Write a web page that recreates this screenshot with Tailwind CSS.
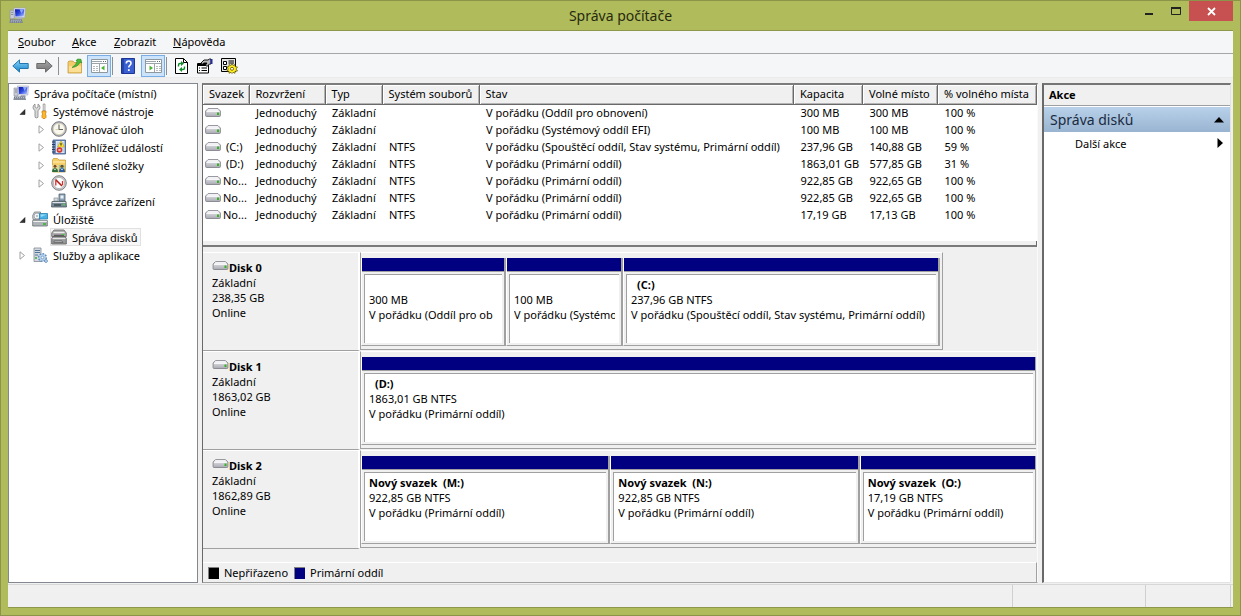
<!DOCTYPE html>
<html lang="cs">
<head>
<meta charset="utf-8">
<meta name="viewport" content="width=device-width, initial-scale=1">
<title>Správa počítače</title>
<script src="https://cdn.jsdelivr.net/npm/@tailwindcss/browser@4"></script>
</head>
<body class="h-screen overflow-hidden font-['Noto_Sans','Open_Sans',sans-serif] text-[11px] leading-[15px] text-black">
<svg class="absolute size-0" aria-hidden="true">
  <linearGradient id="gBlue" x1="0" y1="0" x2="0" y2="1"><stop offset="0" stop-color="#8ad6fa"/><stop offset="1" stop-color="#1583c9"/></linearGradient>
  <linearGradient id="gGray" x1="0" y1="0" x2="0" y2="1"><stop offset="0" stop-color="#aaa"/><stop offset="1" stop-color="#707070"/></linearGradient>
  <linearGradient id="gScreen" x1="0" y1="0" x2="1" y2="1"><stop offset="0" stop-color="#0818a0"/><stop offset=".5" stop-color="#2c48e0"/><stop offset="1" stop-color="#b8d0ff"/></linearGradient>
  <linearGradient id="gDrive" x1="0" y1="0" x2="0" y2="1"><stop offset="0" stop-color="#ececf0"/><stop offset="1" stop-color="#a9a9b2"/></linearGradient>
  <symbol id="computer" viewBox="0 0 16 16">
    <path d="M1 3h4v8H1z" fill="#c9ccd6" stroke="#8b8f9c" stroke-width=".6"/><path d="M2 5h2M2 7h2" stroke="#6b7080" stroke-width=".7"/>
    <path d="M4.500 1h11l-.7 9H5.500z" fill="#e4e7f2" stroke="#9aa0b8" stroke-width=".6"/><path d="M5.600 2h8.800l-.5 7H6z" fill="url(#gScreen)"/>
    <path d="M10 2l1.500 4 2.700-4z" fill="#8ea6f8"/><path d="M8 10h4l1 2H7z" fill="#aab0c0"/>
    <path d="M1 11.500h11l1 3.500H.5z" fill="#747d8c"/><path d="M2 12.500h9.500M1.500 14h10.500" stroke="#d5dbe4" stroke-width=".7" stroke-dasharray="1.200 .8"/>
  </symbol>
  <symbol id="drive" viewBox="0 0 16 9">
    <path d="M3 .6h10L15.400 3v4.600q0 .9-1 .9H1.600q-1 0-1-.9V3z" fill="url(#gDrive)" stroke="#85858c" stroke-width=".9"/>
    <path d="M3.200 1.200h9.600L14 2.800H2z" fill="#fafafc"/><path d="M1.500 3.500h13" stroke="#fff" stroke-width=".8"/><path d="M12 4.500h2v2.500h-2z" fill="#35b325"/>
  </symbol>
  <symbol id="tools" viewBox="0 0 16 16">
    <path d="M3 1v3l1.500 1L6 4V1q2 1 2 3.500Q8 6.500 6 7.500v6.700q-1.500 1.500-3 0V7.500Q1 6.500 1 4.500 1 2 3 1z" fill="#d9d9d9" stroke="#858585" stroke-width=".8"/>
    <path d="M11.200 1h1.800v7h-1.800z" fill="#eee" stroke="#888" stroke-width=".7"/><path d="M10 8h4v2l-.8 1 .8 1v2.500l-1 1h-2l-1-1V12l.8-1-.8-1z" fill="#fcb92c" stroke="#c77b10" stroke-width=".7"/>
  </symbol>
  <symbol id="clock" viewBox="0 0 16 16">
    <circle cx="8" cy="8" r="7.300" fill="#b5b7bc" stroke="#6f7278" stroke-width=".9"/><circle cx="8" cy="8" r="5.700" fill="#f9f8ee" stroke="#d8ceb0" stroke-width=".8"/>
    <path d="M8 3.500v5h4" fill="none" stroke="#666" stroke-width="1.100"/><path d="M8 8.500H4.500" stroke="#c9b885" stroke-width=".6"/>
  </symbol>
  <symbol id="events" viewBox="0 0 16 16">
    <path d="M2 1h12.500v14H2z" fill="#7291be" stroke="#41598a" stroke-width=".8"/><path d="M5 2h8.500v12H5z" fill="#d9e6f7"/><path d="M6 4h7M6 6h7M6 8h7M6 10h7M6 12h7" stroke="#8aa7d0" stroke-width=".6"/>
    <path d="M1 3h3M1 5.500h3M1 8h3M1 10.500h3M1 13h3" stroke="#2b3a5c" stroke-width="1"/>
    <path d="M10 2l3.500 6h-7z" fill="#ffe23c" stroke="#b59600" stroke-width=".5"/><path d="M10 4v2.500" stroke="#000" stroke-width=".9"/>
    <circle cx="8.500" cy="11" r="2.800" fill="#d8342a"/><path d="M7.500 10l2 2m0-2l-2 2" stroke="#fff" stroke-width=".8"/>
  </symbol>
  <symbol id="shared" viewBox="0 0 16 16">
    <path d="M1.500 3l1-1.500h4L8 3h6.500v12h-13z" fill="#f5cf69" stroke="#c39a35" stroke-width=".7"/><path d="M2 5h12" stroke="#fff0b8"/>
    <path d="M1 8h5.500v7H1z" fill="#e9dba8"/><path d="M8 8h5.500v7H8z" fill="#8cc5b0"/>
    <circle cx="4" cy="9.200" r="1.500" fill="#7a4a1c"/><path d="M1 15q0-4 3-4t3 4z" fill="#2e6f3d"/><circle cx="11" cy="9.200" r="1.500" fill="#7a4a1c"/><path d="M8 15q0-4 3-4t3 4z" fill="#2a5c9c"/>
    <path d="M3 11.500l1 1.500 1-1.500M10 11.500l1 1.500 1-1.500" fill="none" stroke="#fff" stroke-width=".7"/>
  </symbol>
  <symbol id="perf" viewBox="0 0 16 16">
    <circle cx="8" cy="8" r="7.300" fill="#c9ccd0" stroke="#777" stroke-width=".9"/><circle cx="8" cy="8" r="5.600" fill="#fff" stroke="#a5a5a5" stroke-width=".7"/><path d="M4.800 10.500V5.500M11.500 10V6" fill="none" stroke="#dc2d28" stroke-width="1.300"/><path d="M4.500 4.500l6.500 6.500" stroke="#b01f1a" stroke-width="1.600"/>
  </symbol>
  <symbol id="devices" viewBox="0 0 16 16">
    <path d="M8 1h6v7H8z" fill="#8ba2b5" stroke="#53636f" stroke-width=".8"/><path d="M9.500 2.500h3v3h-3z" fill="#e9f2f8"/><path d="M3 5h4v3H3z" fill="#d6dce0" stroke="#77818a" stroke-width=".6"/>
    <path d="M1 8.500h14l.5 5.500H.5z" fill="#7b8c98" stroke="#4d5a63" stroke-width=".8"/><path d="M1.500 9.500h13" stroke="#dce4e9"/><path d="M3 12h7" stroke="#303a42" stroke-width="1.200"/><path d="M12 11.500h2" stroke="#4cd13e" stroke-width="1.300"/>
  </symbol>
  <symbol id="storage" viewBox="0 0 16 16">
    <path d="M.7 9.500h14.600v5.500H.7z" fill="#aeb4b7" stroke="#686e72" stroke-width=".8"/><path d="M1.200 10.300h13.600" stroke="#fff"/><path d="M11 13h3" stroke="#31b529" stroke-width="1.500"/>
    <path d="M.7 4.500L2.500 1h6L8 8.500H1z" fill="#ced1d4" stroke="#75797d" stroke-width=".8"/><circle cx="5" cy="5" r="3" fill="#eff3f5" stroke="#8c9498" stroke-width=".7"/><circle cx="5" cy="5" r=".8" fill="#7d858b"/>
    <path d="M7.500 2.500h8v5.500h-8z" fill="#49b1e6" stroke="#267fad" stroke-width=".8"/><path d="M8.500 3.500h6L9 6z" fill="#9adcf8"/>
  </symbol>
  <symbol id="diskmgmt" viewBox="0 0 16 16">
    <path d="M3 1h10l2.300 3v3.500H.7V4z" fill="#a9a9ab" stroke="#666" stroke-width=".8"/><path d="M2.500 3.500h11" stroke="#ececec" stroke-width="1.300"/><path d="M3 6.300h10" stroke="#4a4a4a"/>
    <path d="M2 7.500h12l1.300 2V15H.7V9.500z" fill="#98999b" stroke="#5a5a5a" stroke-width=".8"/><path d="M1.500 9.500h13" stroke="#e6e6e6" stroke-width="1.200"/><path d="M3 12h8l1 1.500H3z" fill="#d0d0d0" stroke="#444" stroke-width=".6"/><path d="M11.500 5.500h2" stroke="#45cc37" stroke-width="1.200"/>
  </symbol>
  <symbol id="services" viewBox="0 0 16 16">
    <path d="M2 1h7v13.500H2z" fill="#d5dae0" stroke="#808a96" stroke-width=".8"/><path d="M3 3.500h5M3 5.500h5M3 8h3" stroke="#51749b" stroke-width="1"/><path d="M3 11h2" stroke="#38ad36" stroke-width="1.300"/>
    <circle cx="10.500" cy="10.500" r="3.800" fill="#b5d0eb" stroke="#638dba" stroke-width="1.600" stroke-dasharray="1.700 1.200"/><circle cx="10.500" cy="10.500" r="3" fill="#b5d0eb"/><circle cx="10.500" cy="10.500" r="1.300" fill="#fff" stroke="#638dba" stroke-width=".7"/>
    <circle cx="14" cy="14" r="1.400" fill="#d9e8f6" stroke="#638dba" stroke-width=".9"/>
  </symbol>
  <symbol id="arrowL" viewBox="0 0 17 14"><path d="M.8 7L7.500.9v3.600h8.700v5H7.500v3.600z"/></symbol>
  <symbol id="arrowR" viewBox="0 0 17 14"><path d="M16.200 7L9.500.9v3.600H.8v5h8.700v3.600z"/></symbol>
  <symbol id="folderup" viewBox="0 0 16 16">
    <path d="M1 4l1-1h4l1 1.500h7.500V15H1z" fill="#f3cb6b" stroke="#c49d42" stroke-width=".8"/><path d="M2 8h12v6H2z" fill="#fbdf94"/><path d="M10.500 1l3.500.3.700 3.700-1.600-1Q11 9 5 9.500q4-2.500 5.500-6.500L9 3z" fill="#48bd36" stroke="#288222" stroke-width=".6"/>
  </symbol>
  <symbol id="paneL" viewBox="0 0 17 16"><path d="M.5 1.500h16v13H.5z" fill="#fff" stroke="#8f979f"/><path d="M1 3.500h10M.5 5.500h16" stroke="#9ca4ac"/><path d="M12 3.500h1M14 3.500h1" stroke="#5f6870"/><path d="M8.500 6v8" stroke="#9ca4ac"/><path d="M2 8.500h2M2 10.500h2M2 12.500h2M5 8.500h2M5 10.500h2M5 12.500h2" stroke="#b4bac0"/><path d="M13.500 7.500v5L10 10z" fill="#49b535"/></symbol>
  <symbol id="paneR" viewBox="0 0 17 16"><path d="M.5 1.500h16v13H.5z" fill="#fff" stroke="#8f979f"/><path d="M1 3.500h10M.5 5.500h16" stroke="#9ca4ac"/><path d="M12 3.500h1M14 3.500h1" stroke="#5f6870"/><path d="M9.500 6v8" stroke="#9ca4ac"/><path d="M11 8.500h2M11 10.500h2M11 12.500h2M14 8.500h2M14 10.500h2M14 12.500h2" stroke="#b4bac0"/><path d="M4.500 7.500v5L8 10z" fill="#49b535"/></symbol>
  <symbol id="help" viewBox="0 0 14 16"><path d="M.5.5h13v15H.5z" fill="#3a5fd0" stroke="#1c3594"/><path d="M1 1h2v14H1z" fill="#2645aa"/><path d="M5.300 5.500Q5.300 3 7.700 3t2.300 2.300q0 1.300-1.200 2.100-1 .7-1 2.100" fill="none" stroke="#fff" stroke-width="1.600"/><path d="M6.900 11.200h1.800V13H6.900z" fill="#fff"/></symbol>
  <symbol id="refresh" viewBox="0 0 13 16"><path d="M.5.500h8l4 4v11H.5z" fill="#fff" stroke="#000"/><path d="M8.500.5v4h4" fill="none" stroke="#000"/><path d="M3.500 8.500V7q0-1.500 1.500-1.500h2M9.500 8.500V10q0 1.500-1.500 1.500H6" fill="none" stroke="#118c2b" stroke-width="1.400"/><path d="M6 3l3 2.500L6 8zM7 9l-3 2.500L7 14z" fill="#118c2b"/></symbol>
  <symbol id="props" viewBox="0 0 16 16"><path d="M.5 5.500h11v9.500H.5z" fill="#fff" stroke="#000"/><path d="M1 6h10v2H1z" fill="#000"/><path d="M2 10h1M4.500 10H10M2 12.500h1M4.500 12.500H10" stroke="#000" stroke-width="1.200"/><path d="M4 5l3-3h4l1.500-1H14v5h-1.500L10 8.500 8.500 7 10 5H7L5 6.500z" fill="#b9b9b9" stroke="#000" stroke-width=".9"/><path d="M13.500 1h2v5h-2z" fill="#272ca0"/></symbol>
  <symbol id="settings" viewBox="0 0 17 16"><path d="M.5.5h14v13H.5z" fill="#e6e6e6" stroke="#000"/><path d="M2.500 3.500h3v3h-3zM2.500 8.500h3v3h-3z" fill="#fff" stroke="#000"/><path d="M7.500 3h5.500M7.500 5h5.500" stroke="#000"/><path d="M11 5.500l1 2 2-1v2l2.500.5-1.500 2 1.500 2-2.500.3v2l-2-1-1 1.200-1-1.200-2 1v-2l-2-.3 1.300-2L6 9l2-.5v-2l2 1z" fill="#ffed20" stroke="#554c00" stroke-width=".7"/><circle cx="11" cy="10.800" r="1.500" fill="#fff" stroke="#554c00" stroke-width=".8"/></symbol>
  <symbol id="closed" viewBox="0 0 7 9"><path d="M1 .8v7.400L5.500 4.500z" fill="#fff" stroke="#a0a0a0"/></symbol>
  <symbol id="opened" viewBox="0 0 7 9"><path d="M6 2.500v5H1z" fill="#333" stroke="#111" stroke-width=".5"/></symbol>
</svg>

<div class="flex h-full flex-col border border-[#8c9449] bg-[#b0bb5b] px-[7px] pb-[7px]">
  <header class="grid h-[29px] shrink-0 grid-cols-[1fr_auto_1fr]">
    <svg class="mt-[6px] ml-px size-[17px]"><use href="#computer"/></svg>
    <h1 class="pt-1 text-[14px] leading-[21px] text-[#262a10]">Správa počítače</h1>
    <div class="flex h-5 justify-end">
      <button aria-label="Minimalizovat" class="flex w-[27px] items-center justify-center"><svg class="h-[9px] w-[9px]"><path d="M0 6h8v2H0z" fill="#222"/></svg></button>
      <button aria-label="Maximalizovat" class="flex w-[26px] items-center justify-center"><svg class="h-[9px] w-[11px]"><path d="M.5 1h9v6.500h-9z" fill="none" stroke="#222"/><path d="M0 1h10" stroke="#222" stroke-width="2"/></svg></button>
      <button aria-label="Zavřít" class="flex w-11 items-center justify-center bg-[#c75050]"><svg class="size-[9px]"><path d="M1 1l7 7M8 1L1 8" stroke="#fff" stroke-width="1.800"/></svg></button>
    </div>
  </header>

  <div class="flex min-h-0 flex-1 flex-col border-y border-[#8f984a] bg-[#f0f0f0]">
    <nav class="flex h-[23px] shrink-0 items-center border-b border-[#a6a6a6] bg-[#f5f6f7] pb-px pl-[10px]">
      <button class="w-[54px] text-left"><u>S</u>oubor</button>
      <button class="w-[42px] text-left"><u>A</u>kce</button>
      <button class="w-[59px] text-left"><u>Z</u>obrazit</button>
      <button class="text-left"><u>N</u>ápověda</button>
    </nav>
    <div class="flex h-[24px] shrink-0 items-center border-b border-[#ebebeb] bg-[#f5f6f7] pl-[4px]">
      <button aria-label="Zpět" class="w-6"><svg class="h-[14px] w-[17px] fill-[url(#gBlue)] stroke-[#2377ad]"><use href="#arrowL"/></svg></button>
      <button aria-label="Vpřed" class="w-[22px]"><svg class="h-[14px] w-[17px] fill-[url(#gGray)] stroke-[#6c6c6c]"><use href="#arrowR"/></svg></button>
      <span class="mr-2 h-[18px] w-px bg-[#8f8f8f]"></span>
      <button aria-label="O úroveň výš" class="w-5"><svg class="size-4"><use href="#folderup"/></svg></button>
      <button aria-label="Zobrazit strom konzoly" class="flex h-[22px] w-6 items-center justify-center border border-[#78aee5] bg-[#cce4fb]"><svg class="h-4 w-[17px]"><use href="#paneL"/></svg></button>
      <span class="mr-2 ml-[1px] h-[18px] w-px bg-[#8f8f8f]"></span>
      <button aria-label="Nápověda" class="w-5"><svg class="h-4 w-[14px]"><use href="#help"/></svg></button>
      <button aria-label="Zobrazit podokno akcí" class="flex h-[22px] w-6 items-center justify-center border border-[#78aee5] bg-[#cce4fb]"><svg class="h-4 w-[17px]"><use href="#paneR"/></svg></button>
      <span class="mr-2 ml-[1px] h-[18px] w-px bg-[#8f8f8f]"></span>
      <button aria-label="Aktualizovat" class="w-[22px]"><svg class="h-4 w-[13px]"><use href="#refresh"/></svg></button>
      <button aria-label="Vlastnosti" class="w-6"><svg class="size-4"><use href="#props"/></svg></button>
      <button aria-label="Nastavení" class="w-5"><svg class="h-4 w-[17px]"><use href="#settings"/></svg></button>
    </div>

    <div class="flex min-h-0 flex-1 pt-[5px] pr-[2px]">
      <aside class="mr-1 w-[190px] shrink-0 border border-[#828790] bg-white pl-1 whitespace-nowrap">
        <ul>
          <li>
            <div class="flex h-[18px] items-center gap-[5px]"><svg class="size-4"><use href="#computer"/></svg>Správa počítače (místní)</div>
            <ul class="pl-[6px]">
              <li>
                <div class="flex h-[18px] items-center gap-[5px]"><svg class="mr-[1px] h-[9px] w-[7px]"><use href="#opened"/></svg><svg class="size-4"><use href="#tools"/></svg>Systémové nástroje</div>
                <ul class="pl-[19px]">
                  <li class="flex h-[18px] items-center gap-[5px]"><svg class="mr-[1px] h-[9px] w-[7px]"><use href="#closed"/></svg><svg class="size-4"><use href="#clock"/></svg>Plánovač úloh</li>
                  <li class="flex h-[18px] items-center gap-[5px]"><svg class="mr-[1px] h-[9px] w-[7px]"><use href="#closed"/></svg><svg class="size-4"><use href="#events"/></svg>Prohlížeč událostí</li>
                  <li class="flex h-[18px] items-center gap-[5px]"><svg class="mr-[1px] h-[9px] w-[7px]"><use href="#closed"/></svg><svg class="size-4"><use href="#shared"/></svg>Sdílené složky</li>
                  <li class="flex h-[18px] items-center gap-[5px]"><svg class="mr-[1px] h-[9px] w-[7px]"><use href="#closed"/></svg><svg class="size-4"><use href="#perf"/></svg>Výkon</li>
                  <li class="flex h-[18px] items-center gap-[5px] pl-[13px]"><svg class="size-4"><use href="#devices"/></svg>Správce zařízení</li>
                </ul>
              </li>
              <li>
                <div class="flex h-[18px] items-center gap-[5px]"><svg class="mr-[1px] h-[9px] w-[7px]"><use href="#opened"/></svg><svg class="size-4"><use href="#storage"/></svg>Úložiště</div>
                <ul class="pl-[31px]">
                  <li class="flex h-[18px] w-fit items-center gap-[5px] border border-[#e0e0e0] bg-[#f7f7f7] pr-[3px]"><svg class="size-4"><use href="#diskmgmt"/></svg>Správa disků</li>
                </ul>
              </li>
              <li class="flex h-[18px] items-center gap-[5px]"><svg class="mr-[1px] h-[9px] w-[7px]"><use href="#closed"/></svg><svg class="size-4"><use href="#services"/></svg>Služby a aplikace</li>
            </ul>
          </li>
        </ul>
      </aside>

      <main class="flex min-w-0 flex-1 flex-col border-t-2 border-r border-b border-l border-t-[#7c7c7c] border-r-[#fafafa] border-b-[#a0a0a0] border-l-[#696969]">
        <section class="h-[156px] shrink-0 bg-white">
          <table class="w-full table-fixed border-collapse text-left whitespace-nowrap">
            <colgroup><col class="w-[46px]"><col class="w-[76px]"><col class="w-[57px]"><col class="w-[97px]"><col><col class="w-[69px]"><col class="w-[75px]"><col class="w-[99px]"></colgroup>
            <thead>
              <tr class="h-[19px] bg-[#f0f0f0] *:border-r *:border-b *:border-[#696969] *:p-0 *:pb-px *:pl-[6px] *:font-normal *:shadow-[inset_1px_1px_#fff,inset_-1px_-1px_#b4b4b4]">
                <th>Svazek</th><th>Rozvržení</th><th>Typ</th><th>Systém souborů</th><th>Stav</th><th>Kapacita</th><th>Volné místo</th><th>% volného místa</th>
              </tr>
            </thead>
            <tbody class="[&_td]:h-[17px] [&_td]:overflow-hidden [&_td]:p-0 [&_td]:pl-[7px]">
              <tr><th class="pl-[2px] font-normal"><svg class="h-[9px] w-4"><use href="#drive"/></svg></th><td>Jednoduchý</td><td>Základní</td><td></td><td>V pořádku (Oddíl pro obnovení)</td><td>300 MB</td><td>300 MB</td><td>100 %</td></tr>
              <tr><th class="pl-[2px] font-normal"><svg class="h-[9px] w-4"><use href="#drive"/></svg></th><td>Jednoduchý</td><td>Základní</td><td></td><td>V pořádku (Systémový oddíl EFI)</td><td>100 MB</td><td>100 MB</td><td>100 %</td></tr>
              <tr><th class="pl-[2px] font-normal"><span class="flex items-center gap-[5px]"><svg class="h-[9px] w-4"><use href="#drive"/></svg>(C:)</span></th><td>Jednoduchý</td><td>Základní</td><td>NTFS</td><td>V pořádku (Spouštěcí oddíl, Stav systému, Primární oddíl)</td><td>237,96 GB</td><td>140,88 GB</td><td>59 %</td></tr>
              <tr><th class="pl-[2px] font-normal"><span class="flex items-center gap-[5px]"><svg class="h-[9px] w-4"><use href="#drive"/></svg>(D:)</span></th><td>Jednoduchý</td><td>Základní</td><td>NTFS</td><td>V pořádku (Primární oddíl)</td><td>1863,01 GB</td><td>577,85 GB</td><td>31 %</td></tr>
              <tr><th class="pl-[2px] font-normal"><span class="flex items-center gap-[2px]"><svg class="h-[9px] w-4"><use href="#drive"/></svg>No...</span></th><td>Jednoduchý</td><td>Základní</td><td>NTFS</td><td>V pořádku (Primární oddíl)</td><td>922,85 GB</td><td>922,65 GB</td><td>100 %</td></tr>
              <tr><th class="pl-[2px] font-normal"><span class="flex items-center gap-[2px]"><svg class="h-[9px] w-4"><use href="#drive"/></svg>No...</span></th><td>Jednoduchý</td><td>Základní</td><td>NTFS</td><td>V pořádku (Primární oddíl)</td><td>922,85 GB</td><td>922,65 GB</td><td>100 %</td></tr>
              <tr><th class="pl-[2px] font-normal"><span class="flex items-center gap-[2px]"><svg class="h-[9px] w-4"><use href="#drive"/></svg>No...</span></th><td>Jednoduchý</td><td>Základní</td><td>NTFS</td><td>V pořádku (Primární oddíl)</td><td>17,19 GB</td><td>17,13 GB</td><td>100 %</td></tr>
            </tbody>
          </table>
        </section>
        <div class="h-[6px] shrink-0 border-r border-b-2 border-[#696969] border-b-[#7a7a7a] bg-[#f0f0f0]"></div>

        <section class="min-h-0 flex-1 overflow-hidden pt-[5px] pr-[1px]">
          <article class="flex h-[99px]">
            <div class="w-[157px] shrink-0 border-t border-r-2 border-b border-t-white border-r-white border-b-[#a0a0a0] pt-[7px] pl-[9px]">
              <h2 class="flex items-center font-bold"><svg class="mb-1 h-[9px] w-[17px]"><use href="#drive"/></svg>Disk 0</h2><p>Základní</p><p>238,35 GB</p><p>Online</p>
            </div>
            <div class="mb-px grid w-[86%] max-w-[583px] grid-cols-[145fr_117fr_317fr] border border-[#a0a0a0] border-t-white pt-[5px] pr-[2px] pb-[3px]">
              <div class="flex min-w-0 flex-col border-r-2 border-b border-l border-[#a0a0a0] border-l-white">
                <div class="h-[14px] border-b border-[#a0a0a0] bg-[#000080]"></div>
                <div class="m-[2px] flex-1 border-t border-l border-[#a0a0a0] bg-white px-1 pt-[2px] whitespace-nowrap"><p class="h-[15px]"></p><p>300 MB</p><p>V pořádku (Oddíl pro ob</p></div>
              </div>
              <div class="flex min-w-0 flex-col border-r-2 border-b border-l border-[#a0a0a0] border-l-white">
                <div class="h-[14px] border-b border-[#a0a0a0] bg-[#000080]"></div>
                <div class="m-[2px] flex-1 border-t border-l border-[#a0a0a0] bg-white px-1 pt-[2px] whitespace-nowrap"><p class="h-[15px]"></p><p>100 MB</p><p class="overflow-hidden">V pořádku (Systémo</p></div>
              </div>
              <div class="flex min-w-0 flex-col border-r-2 border-b border-l border-[#a0a0a0] border-l-white">
                <div class="h-[14px] border-b border-[#a0a0a0] bg-[#000080]"></div>
                <div class="m-[2px] flex-1 overflow-hidden border-t border-l border-[#a0a0a0] bg-white px-1 pt-[2px] whitespace-nowrap"><p class="pl-[6px] font-bold">(C:)</p><p>237,96 GB NTFS</p><p>V pořádku (Spouštěcí oddíl, Stav systému, Primární oddíl)</p></div>
              </div>
            </div>
          </article>
          <article class="flex h-[99px]">
            <div class="w-[157px] shrink-0 border-t border-r-2 border-b border-t-white border-r-white border-b-[#a0a0a0] pt-[7px] pl-[9px]">
              <h2 class="flex items-center font-bold"><svg class="mb-1 h-[9px] w-[17px]"><use href="#drive"/></svg>Disk 1</h2><p>Základní</p><p>1863,02 GB</p><p>Online</p>
            </div>
            <div class="mb-px grid flex-1 border-t border-b border-l border-[#a0a0a0] border-t-white pt-[5px] pb-[3px]">
              <div class="flex min-w-0 flex-col border-r border-b border-l border-[#a0a0a0] border-l-white">
                <div class="h-[14px] border-b border-[#a0a0a0] bg-[#000080]"></div>
                <div class="m-[2px] flex-1 overflow-hidden border-t border-l border-[#a0a0a0] bg-white px-1 pt-[2px] whitespace-nowrap"><p class="pl-[6px] font-bold">(D:)</p><p>1863,01 GB NTFS</p><p>V pořádku (Primární oddíl)</p></div>
              </div>
            </div>
          </article>
          <article class="flex h-[99px]">
            <div class="w-[157px] shrink-0 border-t border-r-2 border-b border-t-white border-r-white border-b-[#a0a0a0] pt-[7px] pl-[9px]">
              <h2 class="flex items-center font-bold"><svg class="mb-1 h-[9px] w-[17px]"><use href="#drive"/></svg>Disk 2</h2><p>Základní</p><p>1862,89 GB</p><p>Online</p>
            </div>
            <div class="mb-px grid flex-1 grid-cols-[249fr_249fr_176fr] border-t border-b border-l border-[#a0a0a0] border-t-white pt-[5px] pb-[3px]">
              <div class="flex min-w-0 flex-col border-r-2 border-b border-l border-[#a0a0a0] border-l-white">
                <div class="h-[14px] border-b border-[#a0a0a0] bg-[#000080]"></div>
                <div class="m-[2px] flex-1 overflow-hidden border-t border-l border-[#a0a0a0] bg-white px-1 pt-[2px] whitespace-nowrap"><p class="font-bold">Nový svazek &nbsp;(M:)</p><p>922,85 GB NTFS</p><p>V pořádku (Primární oddíl)</p></div>
              </div>
              <div class="flex min-w-0 flex-col border-r-2 border-b border-l border-[#a0a0a0] border-l-white">
                <div class="h-[14px] border-b border-[#a0a0a0] bg-[#000080]"></div>
                <div class="m-[2px] flex-1 overflow-hidden border-t border-l border-[#a0a0a0] bg-white px-1 pt-[2px] whitespace-nowrap"><p class="font-bold">Nový svazek &nbsp;(N:)</p><p>922,85 GB NTFS</p><p>V pořádku (Primární oddíl)</p></div>
              </div>
              <div class="flex min-w-0 flex-col border-r border-b border-l border-[#a0a0a0] border-l-white">
                <div class="h-[14px] border-b border-[#a0a0a0] bg-[#000080]"></div>
                <div class="m-[2px] flex-1 overflow-hidden border-t border-l border-[#a0a0a0] bg-white px-1 pt-[2px] whitespace-nowrap"><p class="font-bold">Nový svazek &nbsp;(O:)</p><p>17,19 GB NTFS</p><p>V pořádku (Primární oddíl)</p></div>
              </div>
            </div>
          </article>
        </section>
        <footer class="flex h-5 shrink-0 items-center border-t border-r border-t-white border-r-[#a0a0a0] pl-[5px]">
          <span class="mr-[5px] h-3 w-[11px] border-t border-l border-[#808080] bg-black"></span>Nepřiřazeno
          <span class="mr-[5px] ml-[6px] h-3 w-[11px] border-t border-l border-[#808080] bg-[#000080]"></span>Primární oddíl
        </footer>
      </main>

      <aside class="ml-1 w-[189px] shrink-0 border-t-2 border-r border-b border-l-2 border-[#e3e3e3] border-t-[#757575] border-l-[#696969] bg-white">
        <h2 class="h-[21px] border-b border-[#a0a0a0] bg-[#f0f0f0] pt-[2px] pl-[5px] font-bold">Akce</h2>
        <button class="mt-px flex h-[25px] w-full items-center justify-between bg-linear-to-b from-[#b9d1ea] to-[#99b4d1] px-[6px] text-[14px] text-[#1a2a40]">Správa disků<svg class="h-[6px] w-[10px]"><path d="M5 0l5 5.500H0z" fill="#000"/></svg></button>
        <button class="flex h-[22px] w-full items-center justify-between pr-[7px] pl-[31px]">Další akce<svg class="h-[10px] w-[6px]"><path d="M.5 0L6 5 .5 10z"/></svg></button>
      </aside>
    </div>

    <footer class="mt-px flex h-[23px] shrink-0 justify-end border-t border-[#d7d7d7] pr-[2px]">
      <span class="w-[133px] border-l border-[#d0d0d0]"></span>
      <span class="w-[86px] border-x border-[#d0d0d0]"></span>
    </footer>
  </div>
</div>
</body>
</html>
